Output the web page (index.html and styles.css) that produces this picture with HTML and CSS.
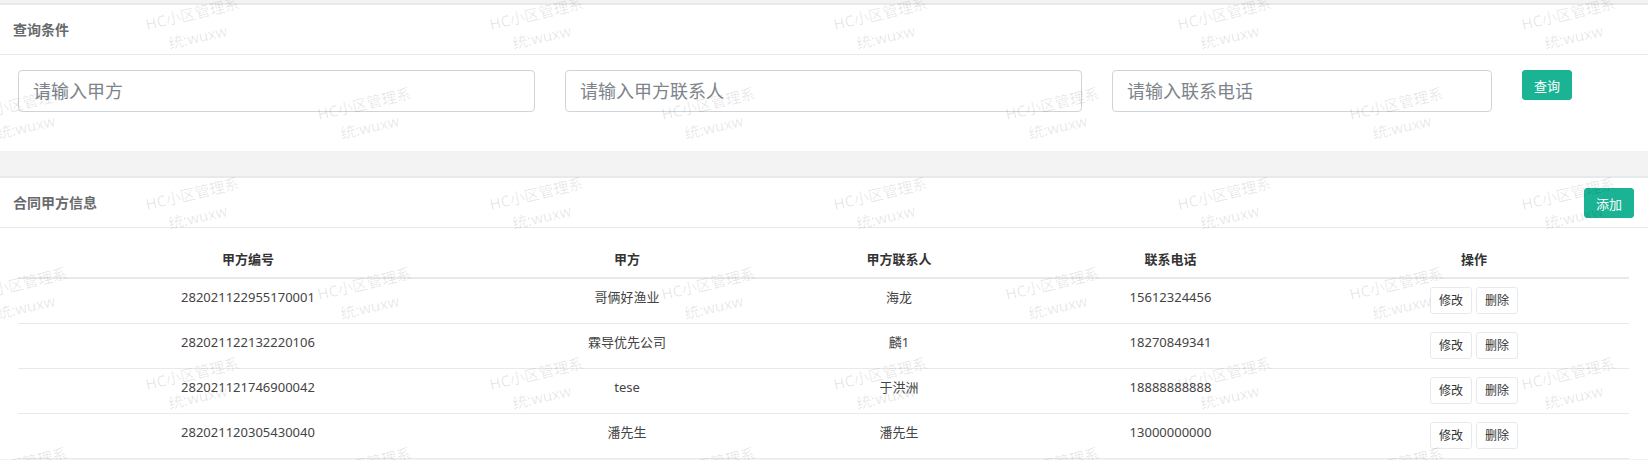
FILE: index.html
```html
<!DOCTYPE html>
<html lang="zh-CN">
<head>
    <meta charset="UTF-8">
    <meta name="viewport" content="width=device-width, initial-scale=1.0">
    <title>合同甲方</title>
    <link rel="stylesheet" href="styles.css">
</head>
<body>
<div class="page">

    <div class="ibox">
        <div class="ibox-title">
            <h5>查询条件</h5>
        </div>
        <div class="ibox-content search-grid">
            <input class="form-control" type="text" placeholder="请输入甲方">
            <input class="form-control" type="text" placeholder="请输入甲方联系人">
            <input class="form-control" type="text" placeholder="请输入联系电话">
            <div><button class="btn btn-primary">查询</button></div>
        </div>
    </div>

    <div class="ibox">
        <div class="ibox-title">
            <h5>合同甲方信息</h5>
            <button class="btn btn-primary btn-add">添加</button>
        </div>
        <div class="ibox-content table-wrap">
            <table class="data-table">
                <colgroup>
                    <col class="col-code">
                    <col class="col-party">
                    <col class="col-contact">
                    <col class="col-phone">
                    <col class="col-ops">
                </colgroup>
                <thead>
                    <tr>
                        <th>甲方编号</th>
                        <th>甲方</th>
                        <th>甲方联系人</th>
                        <th>联系电话</th>
                        <th>操作</th>
                    </tr>
                </thead>
                <tbody id="partyBody"></tbody>
            </table>
        </div>
    </div>

    <div class="watermark" id="watermark"></div>
</div>

<script>
    const parties = [
        { code: '282021122955170001', name: '哥俩好渔业', contact: '海龙', phone: '15612324456' },
        { code: '282021122132220106', name: '霖导优先公司', contact: '麟1', phone: '18270849341' },
        { code: '282021121746900042', name: 'tese', contact: '于洪洲', phone: '18888888888' },
        { code: '282021120305430040', name: '潘先生', contact: '潘先生', phone: '13000000000' }
    ];

    const body = document.getElementById('partyBody');
    parties.forEach(p => {
        const row = body.insertRow();
        [p.code, p.name, p.contact, p.phone].forEach(v => {
            row.insertCell().textContent = v;
        });
        const ops = row.insertCell();
        ops.innerHTML = '<button class="btn-xs">修改</button><button class="btn-xs">删除</button>';
    });

    // watermark tiles, every other row shifted by half a step
    const wm = document.getElementById('watermark');
    for (let r = 0; r < 6; r++) {
        for (let k = -1; k < 5; k++) {
            const x = 195 + (r % 2 ? 172 : 0) + 344 * k;
            const y = 25 + 90 * r;
            const item = document.createElement('div');
            item.className = 'wm-item';
            item.style.left = x + 'px';
            item.style.top = y + 'px';
            item.innerHTML = 'HC小区管理系<br>统:wuxw';
            wm.appendChild(item);
        }
    }
</script>

</body>
</html>
```

FILE: styles.css
```css
html, body {
    margin: 0;
    height: 100%;
    overflow: hidden;
}
body {
    font-family: "Noto Sans", "Noto Sans CJK SC", sans-serif;
    font-size: 13px;
    color: #676a6c;
    background-color: #f3f3f4;
}
.page {
    position: relative;
    padding-top: 3px;
    min-height: 100%;
    box-sizing: border-box;
}
.ibox {
    background-color: #fff;
    border-top: 2px solid #e7eaec;
    margin-bottom: 25px;
}
.ibox-title {
    display: flex;
    justify-content: space-between;
    align-items: flex-start;
    height: 34px;
    padding: 15px 14px 0 13px;
    border-bottom: 1px solid #e7eaec;
}
.ibox-title h5 {
    margin: 0;
    font-size: 14px;
    line-height: 20px;
    font-weight: bold;
    color: #676a6c;
}
.search-grid {
    display: grid;
    grid-template-columns: 517px 517px 380px auto;
    column-gap: 30px;
    padding: 15px 0 39px 18px;
}
.form-control {
    height: 42px;
    box-sizing: border-box;
    padding: 0 14px;
    border: 1px solid #ced4da;
    border-radius: 4px;
    font-family: inherit;
    font-size: 18px;
    color: #495057;
    outline: none;
}
.form-control::placeholder {
    color: #7d848b;
    opacity: 1;
}
.btn {
    height: 30px;
    padding: 0 11px;
    border: 1px solid transparent;
    border-radius: 3px;
    font-family: inherit;
    font-size: 13px;
    cursor: pointer;
}
.btn-primary {
    background-color: #1ab394;
    border-color: #1ab394;
    color: #fff;
}
.btn-add {
    margin-top: -5px;
}
.table-wrap {
    padding: 14px 19px 0 18px;
}
.data-table {
    width: 1611px;
    border-collapse: separate;
    border-spacing: 0;
    table-layout: fixed;
}
.col-code { width: 460px; }
.col-party { width: 298px; }
.col-contact { width: 246px; }
.col-phone { width: 297px; }
.col-ops { width: 310px; }
.data-table th {
    padding: 8px;
    line-height: 19px;
    border-bottom: 2px solid #e7eaec;
    font-weight: bold;
    color: #333;
    text-align: center;
}
.data-table td {
    padding: 8px;
    height: 28px;
    line-height: 20px;
    border-bottom: 1px solid #e7eaec;
    text-align: center;
    vertical-align: top;
    color: #444;
}
.btn-xs {
    display: inline-block;
    vertical-align: top;
    height: 27px;
    padding: 0 8px;
    margin: 0 2px;
    background-color: #fff;
    border: 1px solid #e7eaec;
    border-radius: 3px;
    font-family: inherit;
    font-size: 12px;
    line-height: 25px;
    color: #333;
    cursor: pointer;
}
.watermark {
    position: absolute;
    top: 0;
    left: 0;
    right: 0;
    bottom: 0;
    overflow: hidden;
    pointer-events: none;
}
.wm-item {
    position: absolute;
    transform: translate(-50%, -50%) rotate(-13deg);
    text-align: center;
    white-space: nowrap;
    font-size: 15px;
    line-height: 24px;
    color: rgba(0, 0, 0, 0.1);
}
```
